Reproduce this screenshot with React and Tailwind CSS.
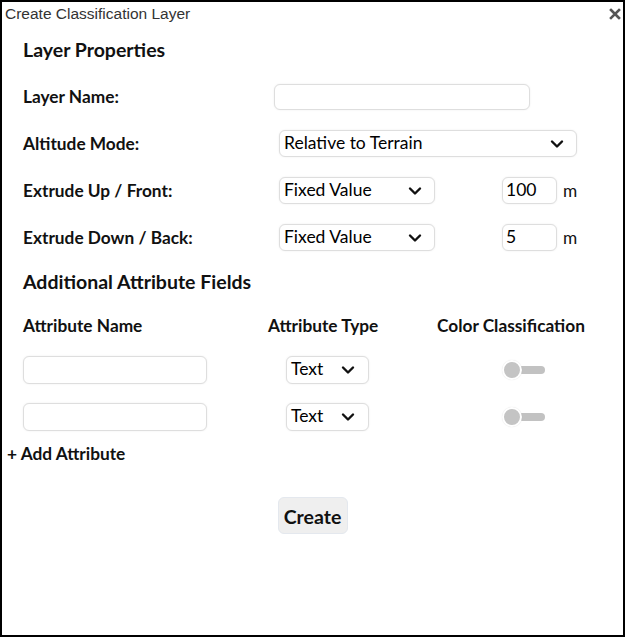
import React from "react";

const body = { fontFamily: "Lato, 'Open Sans', sans-serif" };

function Chevron() {
  return (
    <svg width="14" height="10" viewBox="0 0 14 10" className="shrink-0">
      <polyline
        points="2,2.5 7,7.5 12,2.5"
        fill="none"
        stroke="#111"
        strokeWidth="2.4"
        strokeLinecap="round"
        strokeLinejoin="round"
      />
    </svg>
  );
}

function FakeSelect({ value, className }) {
  return (
    <div
      className={`flex items-center justify-between bg-white border border-[#dedede] rounded-[6px] shadow-[0_0_2px_rgba(0,0,0,0.08)] pl-[4px] text-[17.5px] text-black ${className}`}
    >
      <span>{value}</span>
      <Chevron />
    </div>
  );
}

function TextBox({ value = "", className }) {
  return (
    <div
      className={`flex items-center bg-white border border-[#dedede] rounded-[6px] shadow-[0_0_2px_rgba(0,0,0,0.08)] pl-[3px] text-[17.5px] text-black ${className}`}
    >
      {value}
    </div>
  );
}

function Toggle() {
  return (
    <div className="relative w-[44px] h-[20px]">
      <div className="absolute left-[16px] top-[6px] w-[27px] h-[8px] rounded-full bg-[#c2c2c2]" />
      <div className="absolute left-0 top-0 w-[20px] h-[20px] rounded-full bg-[#c4c4c4] border-2 border-white shadow-[0_0_1px_rgba(0,0,0,0.15)]" />
    </div>
  );
}

export default function App() {
  const attrs = [1, 2];
  return (
    <div
      className="w-[625px] h-[637px] border-2 border-black bg-white flex flex-col text-[#111]"
      style={body}
    >
      <div className="h-[24px] flex items-center justify-between pl-[3px] pr-[2px]">
        <span
          className="text-[15.5px] text-[#333]"
          style={{ fontFamily: "'Liberation Sans', Arial, sans-serif" }}
        >
          Create Classification Layer
        </span>
        <svg width="12" height="12" viewBox="0 0 12 12">
          <path
            d="M2 2 L10 10 M10 2 L2 10"
            stroke="#555"
            strokeWidth="2.6"
            strokeLinecap="square"
          />
        </svg>
      </div>

      <div className="px-[6px]">
        <div className="ml-[15px]">
          <h2 className="mt-[12px] h-[24px] leading-[24px] text-[19.5px] font-bold">
            Layer Properties
          </h2>

          <div className="mt-[11px] flex flex-col text-[17.3px]">
            <div className="h-[47px] flex items-center">
              <div className="w-[251px] font-bold">Layer Name:</div>
              <TextBox className="w-[256px] h-[26px]" />
            </div>
            <div className="h-[47px] flex items-center">
              <div className="w-[256px] font-bold">Altitude Mode:</div>
              <FakeSelect
                value="Relative to Terrain"
                className="w-[298px] h-[27px] pr-[12px]"
              />
            </div>
            <div className="h-[47px] flex items-center">
              <div className="w-[256px] font-bold">Extrude Up / Front:</div>
              <FakeSelect value="Fixed Value" className="w-[156px] h-[27px] pr-[12px]" />
              <TextBox value="100" className="ml-[67px] w-[55px] h-[27px]" />
              <span className="ml-[6px]">m</span>
            </div>
            <div className="h-[47px] flex items-center">
              <div className="w-[256px] font-bold">Extrude Down / Back:</div>
              <FakeSelect value="Fixed Value" className="w-[156px] h-[27px] pr-[12px]" />
              <TextBox value="5" className="ml-[67px] w-[55px] h-[27px]" />
              <span className="ml-[6px]">m</span>
            </div>
          </div>

          <h2 className="mt-[9px] h-[24px] leading-[24px] text-[19.5px] font-bold">
            Additional Attribute Fields
          </h2>

          <div className="mt-[20px] h-[24px] flex items-center text-[17.3px] font-bold">
            <div className="w-[245px]">Attribute Name</div>
            <div className="w-[169px]">Attribute Type</div>
            <div>Color Classification</div>
          </div>

          <div className="mt-[8px] flex flex-col">
            {attrs.map((a) => (
              <div key={a} className="h-[47px] flex items-center">
                <TextBox className="w-[184px] h-[28px]" />
                <div className="w-[79px]" />
                <FakeSelect value="Text" className="w-[83px] h-[28px] pr-[13px]" />
                <div className="w-[133px]" />
                <Toggle />
              </div>
            ))}
          </div>
        </div>

        <div className="mt-[2px] h-[24px] leading-[24px] -ml-[1px] text-[17.3px] font-bold">
          + Add Attribute
        </div>

        <div className="mt-[31px] flex justify-center">
          <button className="w-[70px] h-[37px] rounded-[6px] bg-[#efefef] border border-[#e4e8ee] text-[19.5px] font-bold text-[#111] pt-[2px]">
            Create
          </button>
        </div>
      </div>
    </div>
  );
}
